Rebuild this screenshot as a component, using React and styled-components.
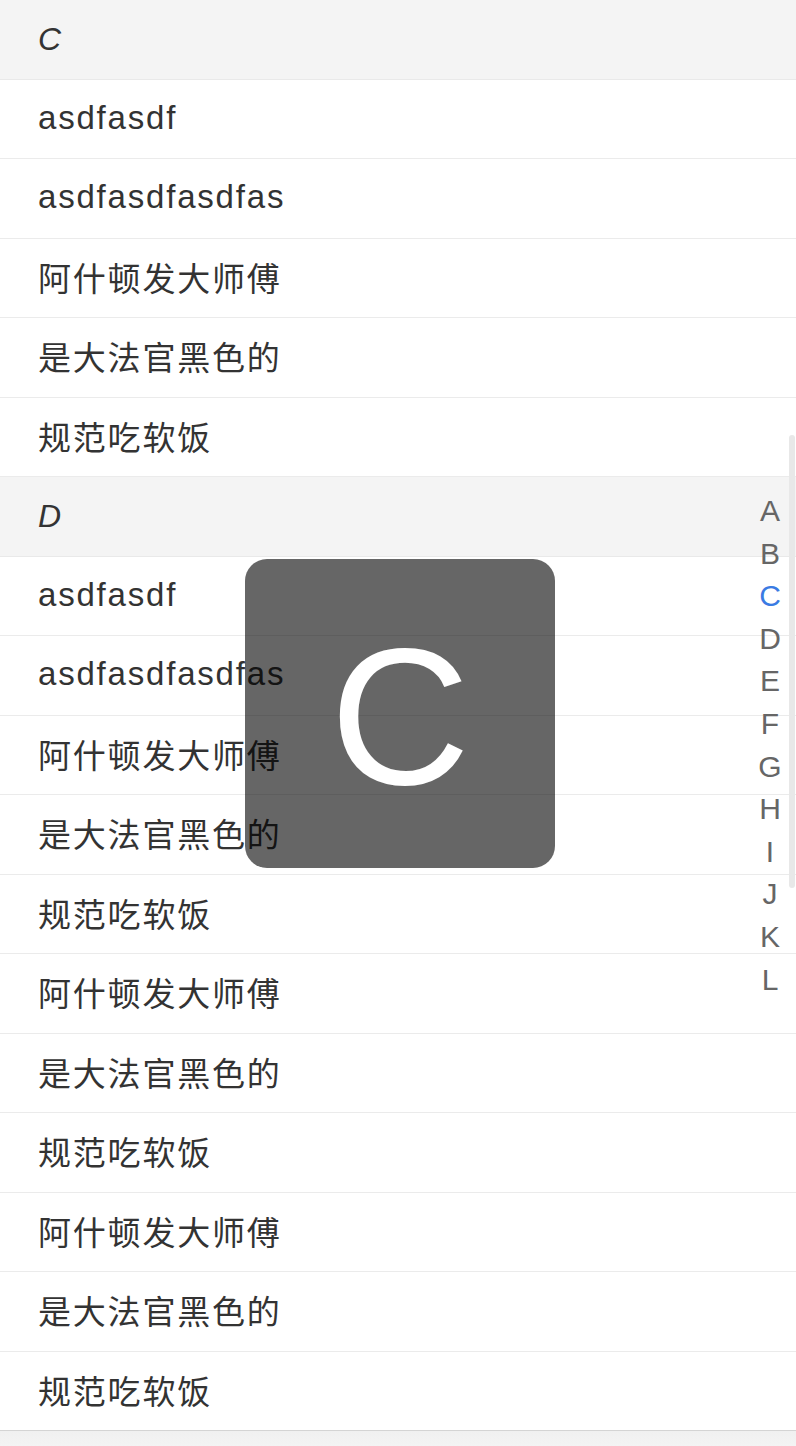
import React from 'react';
import styled, { createGlobalStyle } from 'styled-components';

const GlobalStyle = createGlobalStyle`
  body {
    margin: 0;
    background: #fff;
    font-family: "Liberation Sans", "Noto Sans CJK SC", Arial, sans-serif;
    color: #333;
  }
`

const Page = styled.div`
  position: relative;
  width: 796px;
  height: 1446px;
  overflow: hidden;
`

const List = styled.div`
  display: flex;
  flex-direction: column;
`

const Header = styled.div`
  box-sizing: border-box;
  height: 79.5px;
  display: flex;
  align-items: center;
  padding-left: 38px;
  background: #f4f4f4;
  border-bottom: 1px solid #e9e9e9;
  font-size: 32px;
  font-style: italic;
  color: #333;
`

const Row = styled.div`
  box-sizing: border-box;
  height: 79.5px;
  display: flex;
  align-items: center;
  padding-left: 38px;
  padding-bottom: 2px;
  background: #fff;
  border-bottom: 1px solid ${p => (p.last ? '#d4d4d4' : '#ebebeb')};
  font-size: 33px;
  letter-spacing: 1.8px;
  color: #333;
`

const Tail = styled.div`
  height: 20px;
  background: linear-gradient(#f0f0f0, #f5f5f5);
`

const IndexBar = styled.ul`
  position: absolute;
  right: 6px;
  top: 490px;
  width: 40px;
  margin: 0;
  padding: 0;
  list-style: none;
  display: flex;
  flex-direction: column;
  align-items: center;
`

const IndexLetter = styled.li`
  height: 42.6px;
  line-height: 42.6px;
  font-size: 30px;
  color: ${p => (p.active ? '#3a7be3' : '#666')};
`

const ScrollTrack = styled.div`
  position: absolute;
  left: 789px;
  top: 435px;
  width: 6px;
  height: 453px;
  background: #e8e8e8;
  border-radius: 3px;
`

const Toast = styled.div`
  position: absolute;
  left: 245px;
  top: 559px;
  width: 310px;
  height: 309px;
  border-radius: 22px;
  background: rgba(0, 0, 0, 0.6);
  display: flex;
  align-items: center;
  justify-content: center;
  color: #fff;
  font-size: 194px;
  line-height: 1;
  padding-top: 6px;
  box-sizing: border-box;
`

const few = ['asdfasdf', 'asdfasdfasdfas', '阿什顿发大师傅', '是大法官黑色的', '规范吃软饭']
const more = [
  'asdfasdf', 'asdfasdfasdfas',
  '阿什顿发大师傅', '是大法官黑色的', '规范吃软饭',
  '阿什顿发大师傅', '是大法官黑色的', '规范吃软饭',
  '阿什顿发大师傅', '是大法官黑色的', '规范吃软饭',
]
const letters = 'ABCDEFGHIJKL'.split('')

export default function App() {
  return (
    <Page>
      <GlobalStyle />
      <List>
        <Header>C</Header>
        {few.map((t, i) => <Row key={'c' + i}>{t}</Row>)}
        <Header>D</Header>
        {more.map((t, i) => <Row key={'d' + i} last={i === more.length - 1}>{t}</Row>)}
        <Tail />
      </List>
      <ScrollTrack />
      <IndexBar>
        {letters.map(l => <IndexLetter key={l} active={l === 'C'}>{l}</IndexLetter>)}
      </IndexBar>
      <Toast>C</Toast>
    </Page>
  )
}
